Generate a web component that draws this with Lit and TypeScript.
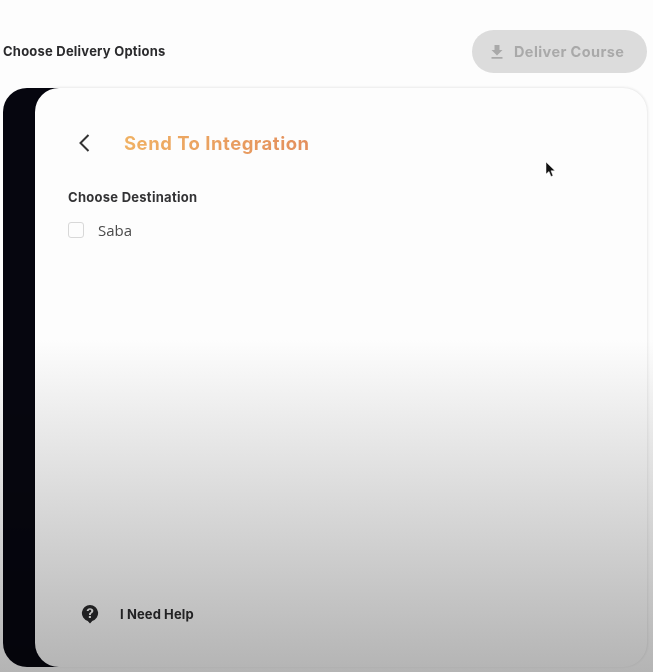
import { LitElement, html, css } from "lit";
import { customElement } from "lit/decorators.js";

@customElement("app-root")
export class AppRoot extends LitElement {
  static styles = css`
    :host { display: block; width: 653px; height: 672px; position: relative; overflow: hidden; background: #fdfdfd; font-family: Inter, "Noto Sans", sans-serif; }
    .page { display: flex; flex-direction: column; height: 672px; box-sizing: border-box; padding: 30px 6px 5px 3px; }
    .top { display: flex; align-items: center; justify-content: space-between; height: 43px; margin-bottom: 15px; }
    .top h2 { margin: 0 0 2px; font-size: 13px; font-weight: 700; color: #2b2b2d; letter-spacing: 0.22px; }
    .deliver { display: flex; align-items: center; gap: 10px; box-sizing: border-box; width: 175px; height: 43px; padding-left: 18px; border-radius: 22px; background: #dcdcdc; color: #a9a9a9; font-size: 14.5px; font-weight: 700; letter-spacing: 0.4px; }
    .deliver svg { width: 14px; height: 16px; flex: none; }
    .shell { flex: 1; display: flex; background: linear-gradient(90deg, #06060f 60px, transparent 60px); border-radius: 24px; padding-left: 32px; }
    .card { flex: 1; display: flex; flex-direction: column; background: #fdfdfd; border-radius: 24px; padding: 40px 32px 43px 33px; box-shadow: 0 -1px 3px rgba(0,0,0,.05), 1px 0 3px rgba(0,0,0,.06); }
    .head { display: flex; align-items: center; height: 30px; }
    .back { width: 14px; height: 20px; margin: 0 33px 0 9px; flex: none; }
    .head h1 { margin: 0; font-size: 18.5px; font-weight: 700; letter-spacing: 0.5px; background: linear-gradient(90deg, #f0b163, #e38f5e); -webkit-background-clip: text; background-clip: text; color: transparent; }
    .label { margin-top: 30px; font-size: 13px; font-weight: 700; color: #333335; letter-spacing: 0.27px; line-height: 18px; }
    .opt { display: flex; align-items: center; gap: 14px; margin-top: 14px; font-family: "Open Sans", sans-serif; font-size: 15px; color: #4a4a4a; }
    .box { width: 14px; height: 14px; border: 1.5px solid #d8d8d8; border-radius: 3px; background: #fdfdfd; flex: none; }
    .help { display: flex; align-items: center; gap: 21px; margin-top: auto; padding-left: 13px; font-size: 13px; font-weight: 700; color: #2c2c2e; letter-spacing: 0.1px; }
    .help svg { width: 18px; height: 20px; flex: none; }
    .fade { position: absolute; inset: 340px 0 0 0; pointer-events: none; mix-blend-mode: multiply; background: linear-gradient(180deg, #fff, #b6b6b6); }
    .cursor { position: absolute; left: 545px; top: 161px; width: 11px; height: 18px; }
  `;

  render() {
    return html`
      <div class="page">
        <div class="top">
          <h2>Choose Delivery Options</h2>
          <div class="deliver">
            <svg viewBox="0 0 14 16"><path fill="#a9a9a9" d="M4.500 1h5v5h3L7 11.500 1.500 6h3zM1.500 13h11v1.800h-11z"/></svg>
            Deliver Course
          </div>
        </div>
        <div class="shell">
          <div class="card">
            <div class="head">
              <svg class="back" viewBox="0 0 14 20"><path d="M11.500 2 3.500 10l8 8" fill="none" stroke="#333" stroke-width="2"/></svg>
              <h1>Send To Integration</h1>
            </div>
            <div class="label">Choose Destination</div>
            <label class="opt"><span class="box"></span>Saba</label>
            <div class="help">
              <svg viewBox="0 0 20 22"><path fill="#2a2a2c" fill-rule="evenodd" d="M10 1a9 9 0 0 1 2.500 17.650L10 21.500l-2.500-2.850A9 9 0 0 1 10 1zM10 4.500c-2 0-3.500 1.200-3.700 3.200h2.200c.1-.8.7-1.300 1.500-1.300s1.400.5 1.400 1.200c0 .6-.3.9-1 1.400-1 .7-1.500 1.300-1.500 2.700v.5h2.100v-.3c0-.8.3-1.100 1-1.600 1-.7 1.700-1.400 1.700-2.800 0-1.800-1.600-3-3.700-3zM8.700 13.300v2.200h2.300v-2.200z"/></svg>
              I Need Help
            </div>
          </div>
        </div>
      </div>
      <div class="fade"></div>
      <svg class="cursor" viewBox="0 0 11 18"><path fill="#111" stroke="#fff" stroke-width=".5" d="M1 1v12l3-2.500 2 5 2-.8-2-4.900h4z"/></svg>
    `;
  }
}
